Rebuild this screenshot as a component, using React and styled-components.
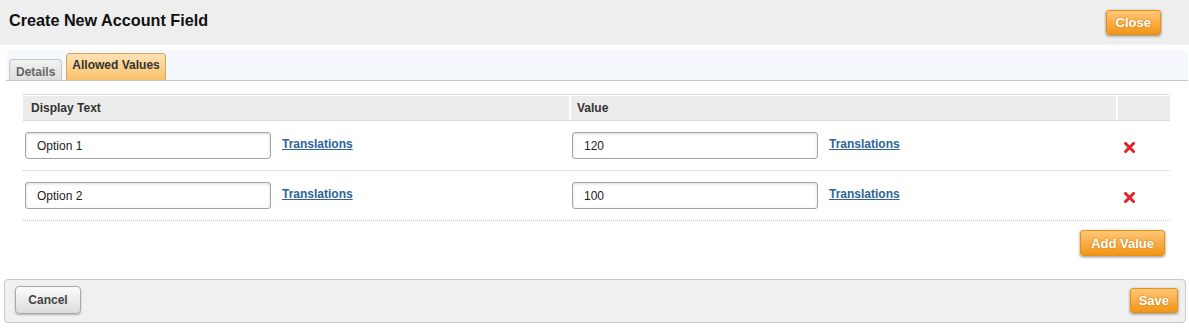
import React from 'react'
import styled, { createGlobalStyle } from 'styled-components'

const GlobalStyle = createGlobalStyle`
  body {
    margin: 0;
    background: #ffffff;
    font-family: "Liberation Sans", Arial, sans-serif;
    color: #222;
  }
`

const Page = styled.div`
  width: 1189px;
  height: 331px;
  display: flex;
  flex-direction: column;
`

const Header = styled.div`
  height: 45px;
  background: #eeeeee;
  display: flex;
  align-items: center;
  justify-content: space-between;
  padding: 0 28px 0 9px;
  box-sizing: border-box;

  h1 {
    margin: 0 0 4px;
    font-size: 16.2px;
    font-weight: bold;
    color: #111;
  }
`

const OrangeButton = styled.button`
  height: ${props => props.$h || 25}px;
  padding: 0 ${props => props.$px || 10}px;
  border: 1px solid #e8900f;
  border-radius: 3px;
  background: linear-gradient(to bottom, #fec77a 0%, #f9ad45 50%, #f29516 100%);
  box-shadow: 0 1px 3px rgba(0, 0, 0, 0.45);
  color: #fff;
  font-family: "Liberation Sans", Arial, sans-serif;
  font-size: 13px;
  font-weight: bold;
  text-shadow: 0 0 2px rgba(160, 90, 0, 0.7);
  cursor: pointer;
`

const TabStrip = styled.div`
  margin: 5px 1px 0 6px;
  height: 30px;
  background: #f5f9fd;
  border-radius: 6px 6px 0 0;
  border-bottom: 1px solid #c8c8c8;
  display: flex;
  align-items: flex-end;
  gap: 4px;
  padding-left: 3px;
`

const Tab = styled.div`
  height: ${props => props.$active ? 27 : 21}px;
  padding: 0 ${props => props.$active ? 5 : 6}px;
  box-sizing: border-box;
  border: 1px solid ${props => props.$active ? '#d9a35a' : '#c4c4c4'};
  border-bottom: none;
  border-radius: 4px 4px 0 0;
  background: ${props => props.$active
    ? 'linear-gradient(to bottom, #fde2b6 0%, #fbcf86 60%, #f9c06a 100%)'
    : 'linear-gradient(to bottom, #f2f2f2 0%, #dedede 100%)'};
  font-size: 12px;
  font-weight: bold;
  color: ${props => props.$active ? '#333' : '#666'};
  padding-top: ${props => props.$active ? 4 : 5}px;
`

const Content = styled.div`
  padding: 13px 19px 0 23px;
  display: flex;
  flex-direction: column;
`

const Row = styled.div`
  display: grid;
  grid-template-columns: 546px 545px 1fr;
  column-gap: 2px;
  border-top: ${props => props.$head ? '1px dotted #c8c8c8' : 'none'};
  border-bottom: ${props => props.$head ? '1px solid #dcdcdc' : '1px dotted #c8c8c8'};
  padding-top: ${props => props.$head ? 1 : 0}px;
  height: ${props => props.$head ? 27 : 50}px;
  box-sizing: border-box;
`

const HeadCell = styled.div`
  background: #ececec;
  font-size: 12px;
  font-weight: bold;
  color: #333;
  padding: 5px 8px 0 ${props => props.$pl || 8}px;
`

const Cell = styled.div`
  display: flex;
  align-items: center;
  padding-left: ${props => props.$pl || 2}px;
  gap: 11px;
`

const TextInput = styled.input`
  width: 246px;
  height: 27px;
  box-sizing: border-box;
  border: 1px solid #a4a4a4;
  border-radius: 3px;
  box-shadow: inset 0 1px 3px rgba(0, 0, 0, 0.15);
  padding: 1px 11px 0;
  font-family: "Liberation Sans", Arial, sans-serif;
  font-size: 12px;
  color: #222;
  outline: none;
`

const LinkText = styled.a`
  font-size: 12px;
  font-weight: bold;
  color: #2f6496;
  text-decoration: underline;
  margin-bottom: 4px;
  cursor: pointer;
`

const RemoveIcon = styled.svg`
  width: 11px;
  height: 11px;
  margin: 3px 0 0 4px;
`

const Actions = styled.div`
  display: flex;
  justify-content: flex-end;
  padding: 9px 5px 0 0;
`

const Footer = styled.div`
  margin: 23px 3px 0 4px;
  height: 44px;
  box-sizing: border-box;
  border: 1px solid #c8c8c8;
  border-radius: 4px;
  background: #f0f0f0;
  display: flex;
  align-items: center;
  justify-content: space-between;
  padding: 0 7px 2px 10px;
`

const GrayButton = styled.button`
  height: 28px;
  width: 66px;
  border: 1px solid #a8a8a8;
  border-radius: 4px;
  background: linear-gradient(to bottom, #fbfbfb 0%, #ececec 50%, #dcdcdc 100%);
  box-shadow: 0 1px 2px rgba(0, 0, 0, 0.25);
  font-family: "Liberation Sans", Arial, sans-serif;
  font-size: 12px;
  font-weight: bold;
  color: #444;
  cursor: pointer;
`

const values = [
  { text: 'Option 1', value: '120' },
  { text: 'Option 2', value: '100' },
]

const Remove = () => (
  <RemoveIcon viewBox="0 0 11 11">
    <path d="M1.5 1.5 L9.5 9.5 M9.5 1.5 L1.5 9.5" stroke="#e0222a" strokeWidth="3" strokeLinecap="square" />
  </RemoveIcon>
)

export default function App() {
  return (
    <Page>
      <GlobalStyle />
      <Header>
        <h1>Create New Account Field</h1>
        <OrangeButton $px={9}>Close</OrangeButton>
      </Header>

      <TabStrip>
        <Tab>Details</Tab>
        <Tab $active>Allowed Values</Tab>
      </TabStrip>

      <Content>
        <Row $head>
          <HeadCell>Display Text</HeadCell>
          <HeadCell $pl={6}>Value</HeadCell>
          <HeadCell />
        </Row>
        {values.map(v => (
          <Row key={v.text}>
            <Cell>
              <TextInput defaultValue={v.text} />
              <LinkText>Translations</LinkText>
            </Cell>
            <Cell $pl={1}>
              <TextInput defaultValue={v.value} />
              <LinkText>Translations</LinkText>
            </Cell>
            <Cell $pl={2}>
              <Remove />
            </Cell>
          </Row>
        ))}
        <Actions>
          <OrangeButton $h={26} $px={10}>Add Value</OrangeButton>
        </Actions>
      </Content>

      <Footer>
        <GrayButton>Cancel</GrayButton>
        <OrangeButton $h={25} $px={8}>Save</OrangeButton>
      </Footer>
    </Page>
  )
}
